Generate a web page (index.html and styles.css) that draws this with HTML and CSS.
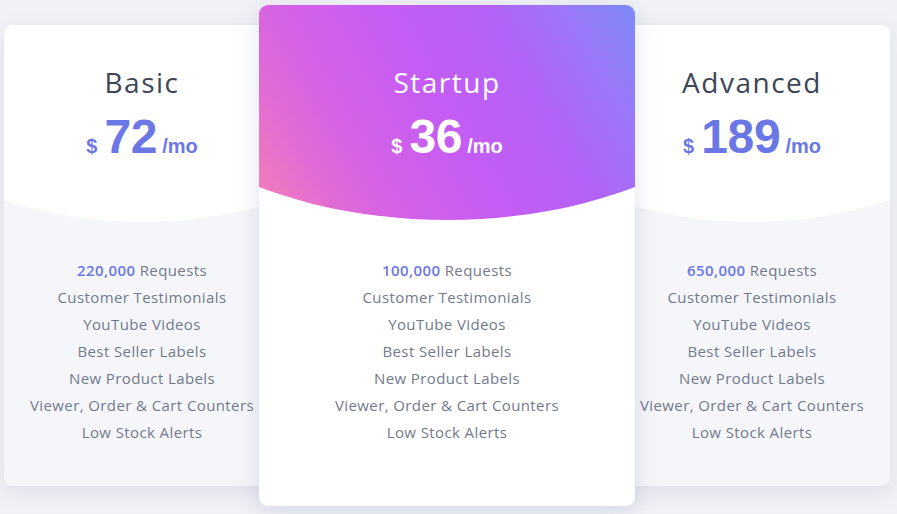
FILE: index.html
```html
<!DOCTYPE html>
<html lang="en">
<head>
<meta charset="utf-8">
<title>Pricing</title>
<link rel="stylesheet" href="styles.css">
</head>
<body>
<div class="pricing">
  <div class="card card-side">
    <div class="head">
      <h2 class="title">Basic</h2>
      <div class="price"><span class="cur">$</span><span class="amt">72</span><span class="per">/mo</span></div>
    </div>
    <ul class="features">
      <li><b>220,000</b> Requests</li>
      <li>Customer Testimonials</li>
      <li>YouTube Videos</li>
      <li>Best Seller Labels</li>
      <li>New Product Labels</li>
      <li>Viewer, Order &amp; Cart Counters</li>
      <li>Low Stock Alerts</li>
    </ul>
  </div>
  <div class="card card-main">
    <div class="head">
      <h2 class="title">Startup</h2>
      <div class="price"><span class="cur">$</span><span class="amt">36</span><span class="per">/mo</span></div>
    </div>
    <ul class="features">
      <li><b>100,000</b> Requests</li>
      <li>Customer Testimonials</li>
      <li>YouTube Videos</li>
      <li>Best Seller Labels</li>
      <li>New Product Labels</li>
      <li>Viewer, Order &amp; Cart Counters</li>
      <li>Low Stock Alerts</li>
    </ul>
  </div>
  <div class="card card-side">
    <div class="head">
      <h2 class="title">Advanced</h2>
      <div class="price"><span class="cur">$</span><span class="amt">189</span><span class="per">/mo</span></div>
    </div>
    <ul class="features">
      <li><b>650,000</b> Requests</li>
      <li>Customer Testimonials</li>
      <li>YouTube Videos</li>
      <li>Best Seller Labels</li>
      <li>New Product Labels</li>
      <li>Viewer, Order &amp; Cart Counters</li>
      <li>Low Stock Alerts</li>
    </ul>
  </div>
</div>
</body>
</html>
```
FILE: styles.css
```css
* { box-sizing: border-box; }
html, body { margin: 0; padding: 0; }
body {
  background: #f1f2f6;
  font-family: "Open Sans", "DejaVu Sans", sans-serif;
  width: 897px;
  height: 514px;
  overflow: hidden;
}
.pricing {
  display: flex;
  align-items: center;
  padding: 5px 0 0 4px;
}
.card {
  border-radius: 9px;
  overflow: hidden;
  display: flex;
  flex-direction: column;
}
.card-side {
  width: 276px;
  height: 461px;
  background: #f5f6f9;
  box-shadow: 0 6px 22px rgba(90, 100, 150, 0.13);
  position: relative;
  z-index: 1;
}
.card-main {
  width: 376px;
  height: 501px;
  margin: 0 -21px;
  background: #ffffff;
  box-shadow: 0 6px 24px rgba(90, 100, 150, 0.18);
  position: relative;
  z-index: 2;
}
.head {
  text-align: center;
  flex: none;
}
.card-side .head {
  height: 197px;
  padding-top: 40px;
  background: #ffffff;
  clip-path: ellipse(300px 197px at 50% 0);
}
.card-main .head {
  height: 215px;
  padding-top: 60px;
  background: linear-gradient(60deg, #f580b4 0%, #e06cd4 16%, #d462e4 28%, #c45cf5 50%, #b262f6 70%, #9a78f8 86%, #7d8afa 100%);
  clip-path: ellipse(353px 215px at 50% 0);
}
.title {
  margin: 0;
  font-size: 28px;
  line-height: 34px;
  font-weight: 500;
  letter-spacing: 1.5px;
  color: #3c4656;
}
.card-main .title { color: #ffffff; }
.price {
  margin-top: 10px;
  line-height: 56px;
  font-family: "Liberation Sans", Arial, sans-serif;
  font-weight: 700;
  color: #6b77e5;
}
.card-main .price { color: #ffffff; }
.cur { font-size: 20px; margin-right: 7px; }
.amt { font-size: 48px; letter-spacing: -0.3px; }
.per { font-size: 20px; margin-left: 5px; }
.features {
  list-style: none;
  margin: 0;
  padding: 0;
  text-align: center;
  font-size: 15px;
  line-height: 27px;
  color: #717a8c;
  letter-spacing: 0.4px;
}
.card-side .features { padding-top: 35px; }
.card-main .features { padding-top: 37px; }
.features b { font-weight: 600; color: #6b77e5; }
```
